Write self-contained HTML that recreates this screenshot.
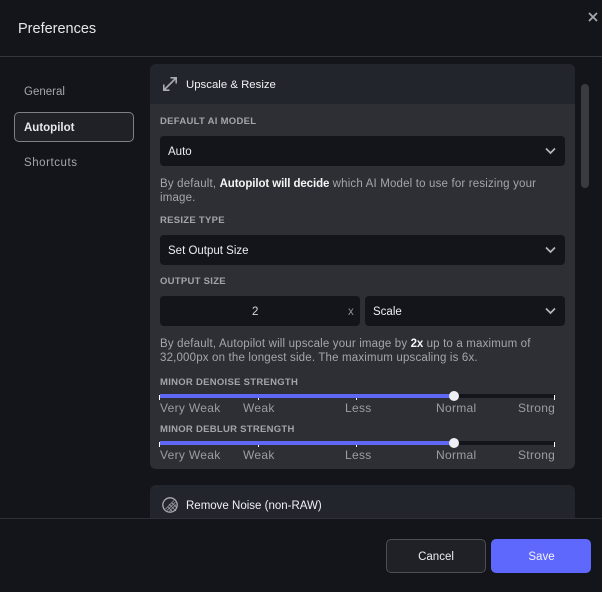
<!DOCTYPE html>
<html>
<head>
<meta charset="utf-8">
<style>
html,body{margin:0;padding:0;background:#14151a;}
body{width:602px;height:592px;position:relative;overflow:hidden;font-family:"Liberation Sans",sans-serif;color:#fff;}
.a{position:absolute;white-space:nowrap;}
.lbl{left:160px;font-size:9.5px;font-weight:700;letter-spacing:.28px;color:#a2a5ab;line-height:12px;}
.sel{position:absolute;background:#14151a;border-radius:4px;height:30px;}
.sel span{position:absolute;left:8px;top:0;line-height:32px;font-size:11.5px;color:#eceef2;white-space:nowrap;}
.sel svg{position:absolute;right:9px;top:11px;}
.p{left:160px;font-size:11.5px;line-height:14px;color:#a3a6ad;letter-spacing:.17px;}
.p b{color:#f4f5f7;letter-spacing:-.1px;}
.tick{position:absolute;width:1px;height:5px;background:#fff;}
.tl{position:absolute;font-size:12px;line-height:14px;color:#9a9da4;white-space:nowrap;letter-spacing:.3px;}
</style>
</head>
<body>
<div class="a" style="left:18px;top:20px;font-size:14.5px;line-height:18px;color:#e6e7ea;">Preferences</div>
<svg class="a" style="left:588px;top:12px;" width="10" height="10" viewBox="0 0 10 10"><path d="M1 1L9 9M9 1L1 9" stroke="#a6a8ae" stroke-width="1.800" fill="none"/></svg>
<div class="a" style="left:0;top:56px;width:602px;height:1px;background:#35363b;"></div>

<div class="a" style="left:24px;top:85px;font-size:11.5px;line-height:14px;color:#a3a6ad;">General</div>
<div class="a" style="left:14px;top:112px;width:118px;height:28px;border:1px solid #7d8087;border-radius:5px;background:#1f2127;"></div>
<div class="a" style="left:24px;top:121px;font-size:11.5px;line-height:14px;font-weight:700;color:#e6e8ec;">Autopilot</div>
<div class="a" style="left:24px;top:156px;font-size:11.5px;line-height:14px;color:#a3a6ad;letter-spacing:.55px;">Shortcuts</div>

<!-- panel 1 -->
<div class="a" style="left:150px;top:64px;width:425px;height:405px;background:#2e2f34;border-radius:6px;overflow:hidden;">
  <div style="position:absolute;left:0;top:0;width:425px;height:40px;background:#22252c;"></div>
</div>
<svg class="a" style="left:163px;top:77px;" width="14" height="14" viewBox="0 0 14 14"><path d="M1 13L13 1M7.500 0.800H13.200V6.500M0.800 7.500V13.200H6.500" stroke="#a9abb0" stroke-width="1.600" fill="none"/></svg>
<div class="a" style="left:186px;top:78px;font-size:11.4px;line-height:14px;color:#f0f1f4;">Upscale &amp; Resize</div>

<div class="a lbl" style="top:116px;">DEFAULT AI MODEL</div>
<div class="sel" style="left:160px;top:136px;width:405px;"><span>Auto</span><svg width="11" height="8" viewBox="0 0 11 8"><path d="M1 1.500L5.500 6L10 1.500" stroke="#b5b7bc" stroke-width="1.700" fill="none"/></svg></div>
<div class="a p" style="top:177px;">By default, <b>Autopilot will decide</b> which AI Model to use for resizing your</div>
<div class="a p" style="top:191px;">image.</div>

<div class="a lbl" style="top:215px;">RESIZE TYPE</div>
<div class="sel" style="left:160px;top:235px;width:405px;"><span>Set Output Size</span><svg width="11" height="8" viewBox="0 0 11 8"><path d="M1 1.500L5.500 6L10 1.500" stroke="#b5b7bc" stroke-width="1.700" fill="none"/></svg></div>

<div class="a lbl" style="top:276px;">OUTPUT SIZE</div>
<div class="sel" style="left:160px;top:296px;width:200px;"><span style="left:92px;color:#d5d7db;">2</span><span style="left:188px;color:#8d9096;">x</span></div>
<div class="sel" style="left:365px;top:296px;width:200px;"><span>Scale</span><svg width="11" height="8" viewBox="0 0 11 8"><path d="M1 1.500L5.500 6L10 1.500" stroke="#b5b7bc" stroke-width="1.700" fill="none"/></svg></div>
<div class="a p" style="top:337px;">By default, Autopilot will upscale your image by <b>2x</b> up to a maximum of</div>
<div class="a p" style="top:351px;">32,000px on the longest side. The maximum upscaling is 6x.</div>

<!-- slider 1 -->
<div class="a lbl" style="top:377px;">MINOR DENOISE STRENGTH</div>
<div class="a" style="left:160px;top:394px;width:395px;height:4px;background:#14151a;"></div>
<div class="a" style="left:160px;top:394px;width:294px;height:4px;background:#5f68f4;"></div>
<div class="tick" style="left:159px;top:395px;"></div>
<div class="tick" style="left:258px;top:398px;height:2px;"></div>
<div class="tick" style="left:356px;top:398px;height:2px;"></div>
<div class="tick" style="left:554px;top:395px;"></div>
<div class="a" style="left:449px;top:391px;width:10px;height:10px;border-radius:50%;background:#eeeff2;"></div>
<div class="tl" style="left:160px;top:401px;">Very Weak</div>
<div class="tl" style="left:243px;top:401px;">Weak</div>
<div class="tl" style="left:345px;top:401px;">Less</div>
<div class="tl" style="left:436px;top:401px;">Normal</div>
<div class="tl" style="left:518px;top:401px;">Strong</div>

<!-- slider 2 -->
<div class="a lbl" style="top:424px;">MINOR DEBLUR STRENGTH</div>
<div class="a" style="left:160px;top:441px;width:395px;height:4px;background:#14151a;"></div>
<div class="a" style="left:160px;top:441px;width:294px;height:4px;background:#5f68f4;"></div>
<div class="tick" style="left:159px;top:442px;"></div>
<div class="tick" style="left:258px;top:445px;height:2px;"></div>
<div class="tick" style="left:356px;top:445px;height:2px;"></div>
<div class="tick" style="left:554px;top:442px;"></div>
<div class="a" style="left:449px;top:438px;width:10px;height:10px;border-radius:50%;background:#eeeff2;"></div>
<div class="tl" style="left:160px;top:448px;">Very Weak</div>
<div class="tl" style="left:243px;top:448px;">Weak</div>
<div class="tl" style="left:345px;top:448px;">Less</div>
<div class="tl" style="left:436px;top:448px;">Normal</div>
<div class="tl" style="left:518px;top:448px;">Strong</div>

<!-- panel 2 -->
<div class="a" style="left:150px;top:485px;width:425px;height:40px;background:#22252c;border-radius:6px 6px 0 0;"></div>
<svg class="a" style="left:162px;top:497px;" width="16" height="16" viewBox="0 0 16 16"><circle cx="8" cy="8" r="7.200" fill="none" stroke="#a9abb0" stroke-width="1.300"/><path d="M3.500 12L12 3.500M5 13.500L13.500 5M7.500 14L14 7.500M7 7L14 14M10 6L14.500 10.500M6 10L10 14" stroke="#a9abb0" stroke-width=".7" fill="none"/></svg>
<div class="a" style="left:186px;top:499px;font-size:11.5px;line-height:14px;color:#f0f1f4;">Remove Noise (non-RAW)</div>

<!-- scrollbar -->
<div class="a" style="left:581px;top:84px;width:8px;height:104px;border-radius:4px;background:#393b41;"></div>

<!-- footer -->
<div class="a" style="left:0;top:518px;width:602px;height:74px;background:#14151a;border-top:1px solid #2f3035;box-sizing:border-box;"></div>
<div class="a" style="left:386px;top:539px;width:98px;height:32px;border:1px solid #4d4e53;border-radius:5px;background:#1f2127;text-align:center;line-height:34px;font-size:11.5px;color:#eceef2;">Cancel</div>
<div class="a" style="left:491px;top:539px;width:100px;height:34px;border-radius:5px;background:#5f68fc;text-align:center;line-height:36px;font-size:11.5px;color:#f2f3ff;padding-left:1px;box-sizing:border-box;">Save</div>
</body>
</html>
